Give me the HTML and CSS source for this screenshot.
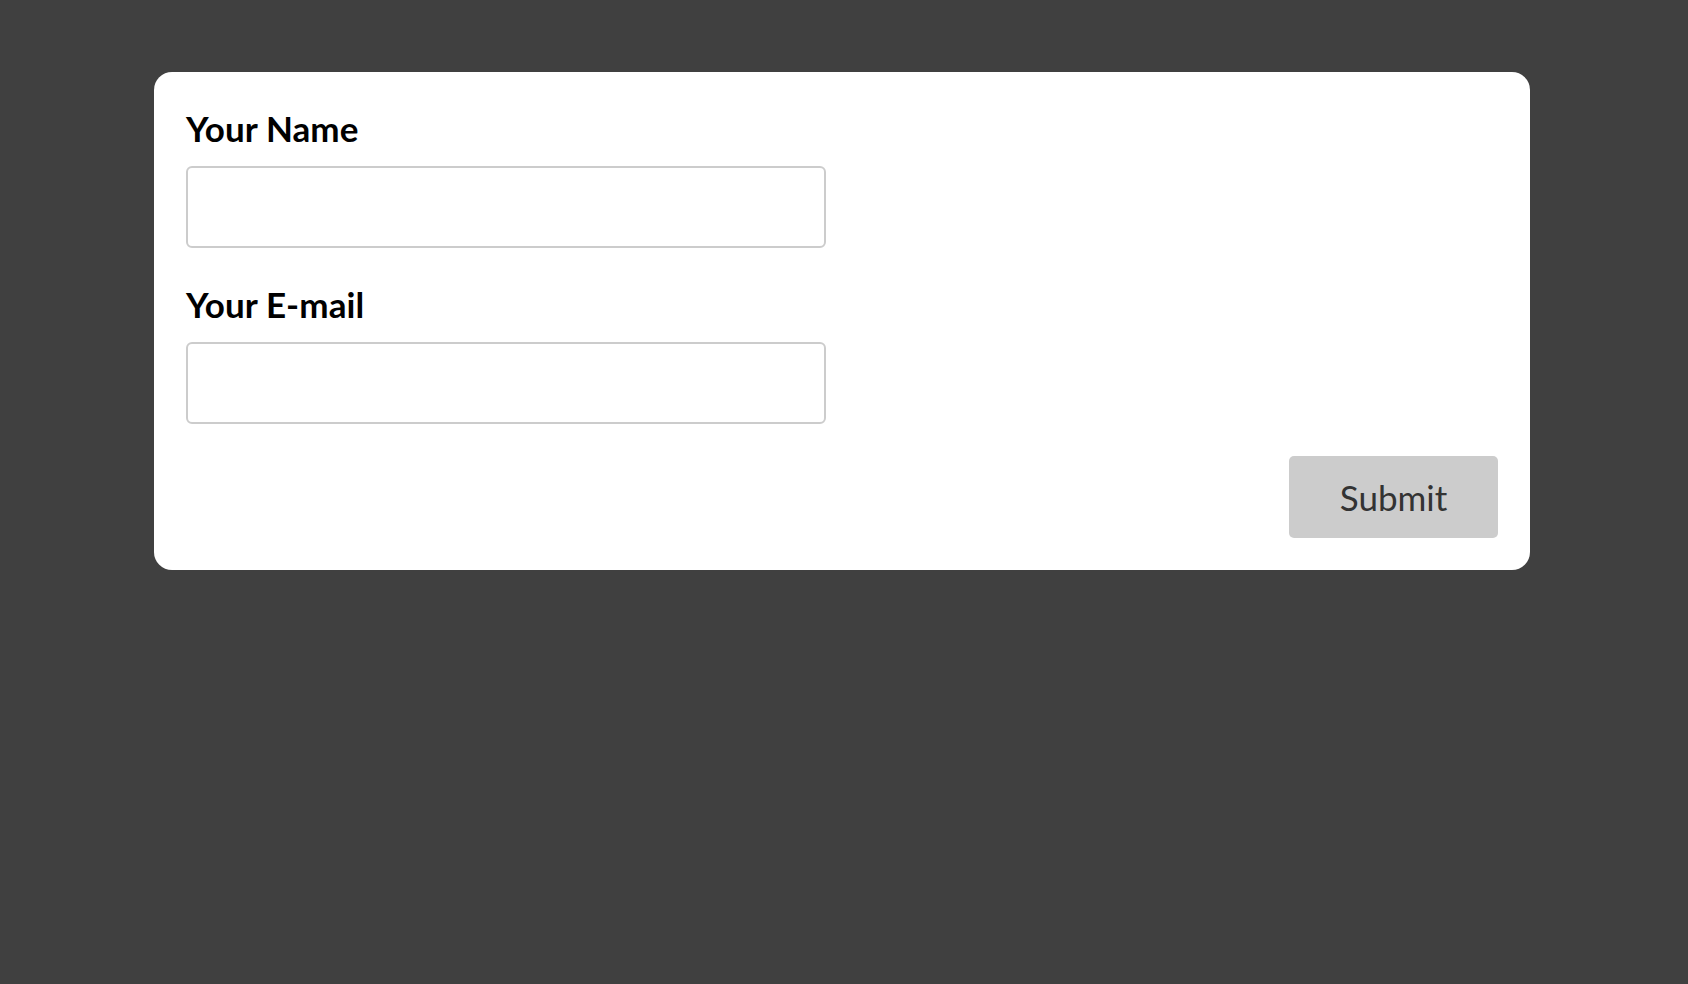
FILE: index.html
```html
<!DOCTYPE html>
<html lang="en">
<head>
<meta charset="utf-8">
<title>Form</title>
<link rel="stylesheet" href="styles.css">
</head>
<body>
<div class="page">
  <form class="card">
    <div class="field">
      <label class="label" for="name">Your Name</label>
      <input class="input" id="name" type="text">
    </div>
    <div class="field">
      <label class="label" for="email">Your E-mail</label>
      <input class="input" id="email" type="email">
    </div>
    <div class="actions">
      <button class="submit" type="button">Submit</button>
    </div>
  </form>
</div>
</body>
</html>
```
FILE: styles.css
```css
html, body {
  margin: 0;
  padding: 0;
  background: #404040;
  height: 100%;
}
body {
  font-family: Lato, "Open Sans", sans-serif;
}
.page {
  padding: 72px 158px 0 154px;
}
.card {
  background: #ffffff;
  border-radius: 18px;
  padding: 32px;
  display: flex;
  flex-direction: column;
  gap: 32px;
}
.field {
  display: flex;
  flex-direction: column;
  align-items: flex-start;
  gap: 14px;
}
.label {
  font-weight: 700;
  font-size: 35px;
  line-height: 48px;
  color: #000;
  letter-spacing: 0.1px;
}
.input {
  box-sizing: border-box;
  width: 640px;
  height: 82px;
  border: 2px solid #cccccc;
  border-radius: 6px;
  background: #fff;
  margin: 0;
  font-size: 28px;
}
.actions {
  display: flex;
  justify-content: flex-end;
}
.submit {
  box-sizing: border-box;
  width: 209px;
  height: 82px;
  border: none;
  border-radius: 5px;
  background: #cccccc;
  color: #333333;
  font-family: Lato, "Open Sans", sans-serif;
  font-size: 35px;
  font-weight: 400;
  padding: 0;
}
```
